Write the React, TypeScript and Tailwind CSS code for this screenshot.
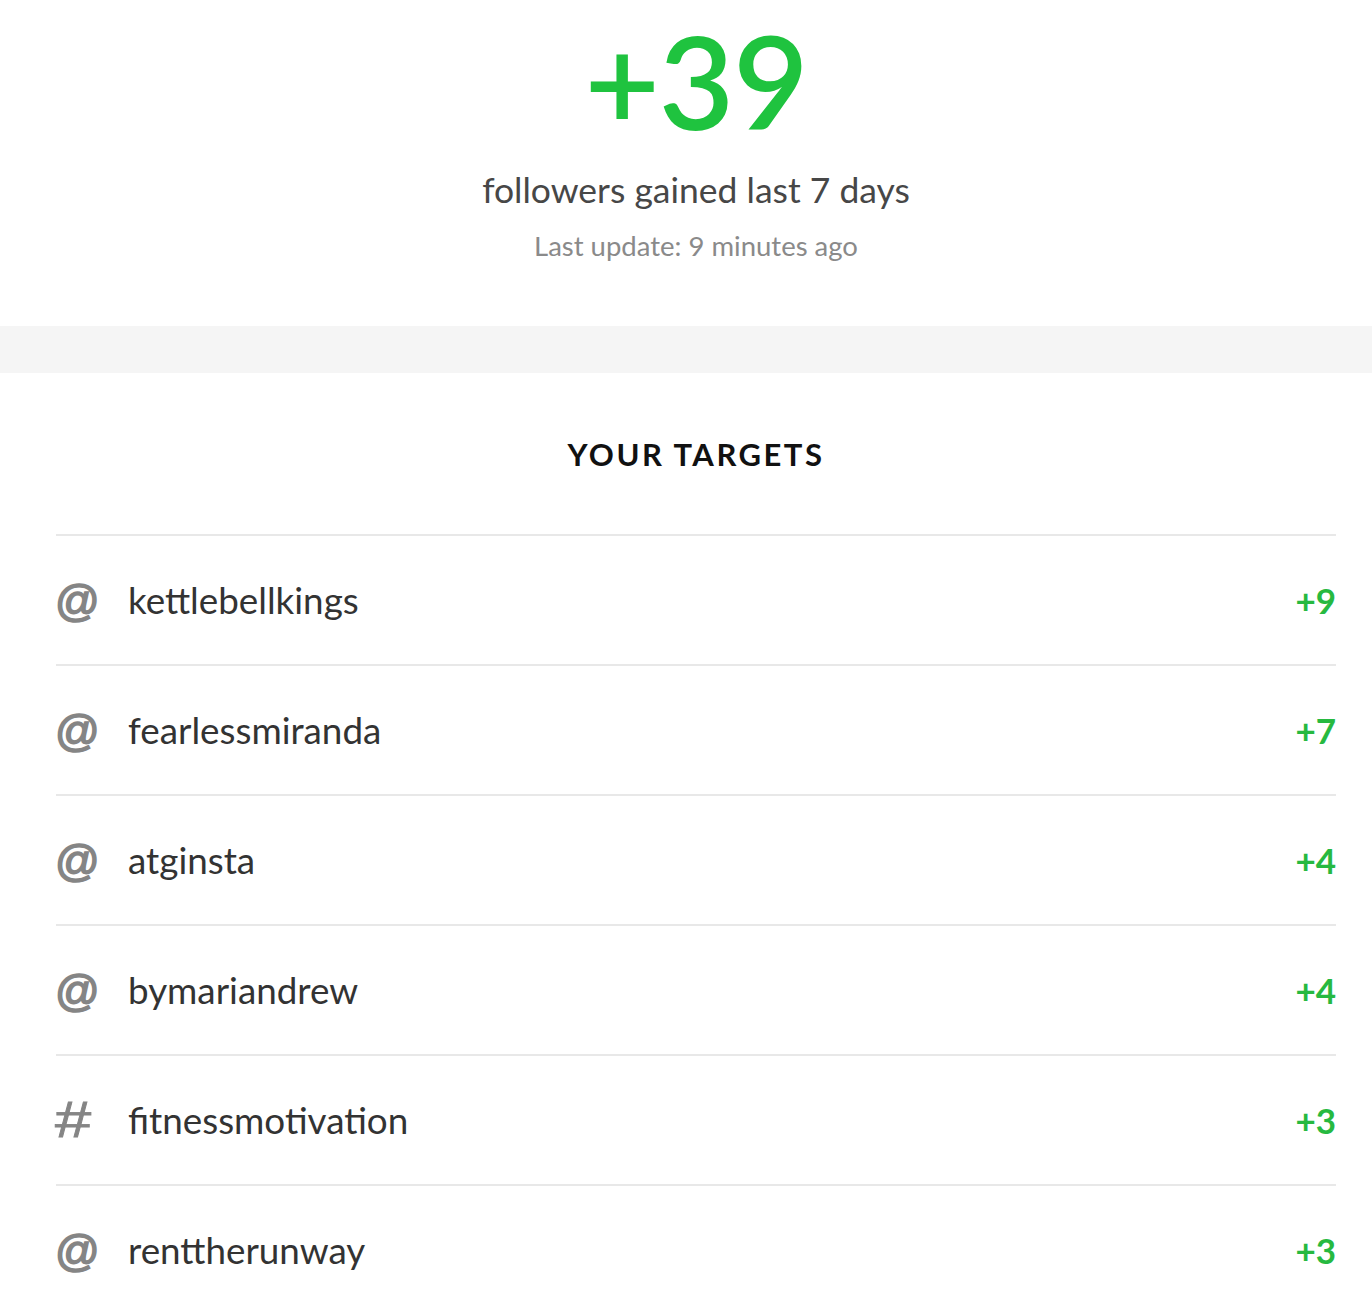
import React from 'react';

const targets = [
  { type: '@', name: 'kettlebellkings', gain: 9 },
  { type: '@', name: 'fearlessmiranda', gain: 7 },
  { type: '@', name: 'atginsta', gain: 4 },
  { type: '@', name: 'bymariandrew', gain: 4 },
  { type: '#', name: 'fitnessmotivation', gain: 3 },
  { type: '@', name: 'renttherunway', gain: 3 },
];

export default function App() {
  return (
    <div className="h-[1312px] overflow-hidden bg-white font-['Lato','Noto_Sans',sans-serif]">
      {/* Summary */}
      <section className="h-[326px] pl-[56px] pr-[36px] flex flex-col items-center pt-[18px]">
        <div className="text-[130px] leading-[124px] font-semibold text-[#1fc33f] tracking-[-1px]">+39</div>
        <div className="mt-[26px] text-[35.5px] leading-[44px] text-[#474747]">followers gained last 7 days</div>
        <div className="mt-[17px] text-[27.5px] leading-[34px] text-[#8a8a8a]">Last update: 9 minutes ago</div>
      </section>

      <div className="h-[47px] bg-[#f5f5f5]" />

      {/* Targets */}
      <section className="pl-[56px] pr-[36px]">
        <h2 className="h-[161px] pt-[61px] text-center text-[31px] leading-[40px] font-bold tracking-[2.5px] text-[#111]">
          YOUR TARGETS
        </h2>
        <ul>
          {targets.map((t) => (
            <li
              key={t.name}
              className="h-[130px] border-t-2 border-[#e8e8e8] flex items-center"
            >
              <span className="w-[72px] flex items-center">
                {t.type === '@' ? (
                  <span className="font-['Liberation_Sans',sans-serif] text-[44px] leading-none text-[#858585] [-webkit-text-stroke:1.6px_#858585] -ml-[1px] translate-y-[1px]">@</span>
                ) : (
                  <span className="font-['Liberation_Sans',sans-serif] text-[50px] leading-none text-[#858585] [-webkit-text-stroke:0.8px_#858585] -ml-[1px] scale-x-[1.3] origin-left">#</span>
                )}
              </span>
              <span className="flex-1 text-[36.8px] leading-none text-[#333]">{t.name}</span>
              <span className="text-[35px] leading-none font-bold text-[#27b940]">+{t.gain}</span>
            </li>
          ))}
        </ul>
      </section>
    </div>
  );
}
